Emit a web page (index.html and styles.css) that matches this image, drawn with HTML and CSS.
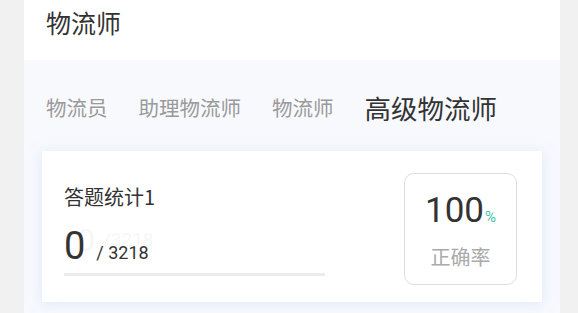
FILE: index.html
```html
<!DOCTYPE html>
<html lang="zh-CN">
<head>
<meta charset="utf-8">
<title>物流师</title>
<link rel="stylesheet" href="styles.css">
</head>
<body>
<div class="page">
  <header class="header">物流师</header>
  <section class="section">
    <nav class="tabs">
      <span class="tab">物流员</span>
      <span class="tab">助理物流师</span>
      <span class="tab">物流师</span>
      <span class="tab active">高级物流师</span>
    </nav>
    <div class="card">
      <div class="stats">
        <div class="stats-title">答题统计1</div>
        <div class="stats-num">
          <span class="big">0</span><span class="total">/ 3218</span>
        </div>
        <div class="bar"></div>
      </div>
      <div class="rate">
        <div class="rate-value">100<span class="pct">%</span></div>
        <div class="rate-label">正确率</div>
      </div>
    </div>
  </section>
</div>
</body>
</html>
```
FILE: styles.css
```css
* { box-sizing: border-box; }
html, body { margin: 0; padding: 0; }
body {
  background: #f1f1f1;
  font-family: Roboto, "Noto Sans CJK SC", sans-serif;
  height: 313px;
  overflow: hidden;
}
.page {
  margin-left: 24px;
  width: 536px;
  height: 313px;
  background: #ffffff;
}
.header {
  height: 60px;
  padding: 6px 0 0 22px;
  font-family: "Noto Sans CJK SC", sans-serif;
  font-size: 25px;
  line-height: 32px;
  color: #333333;
}
.section {
  background: #f7f9fd;
  height: 253px;
  padding: 32px 18px 0 18px;
}
.tabs {
  display: flex;
  align-items: center;
  gap: 31px;
  padding-left: 4px;
  height: 30px;
}
.tab {
  font-family: "Noto Sans CJK SC", sans-serif;
  font-size: 20.5px;
  line-height: 30px;
  color: #9a9a9a;
  white-space: nowrap;
}
.tab.active {
  font-size: 26.5px;
  color: #333333;
  position: relative;
  top: 1px;
}
.card {
  margin-top: 29px;
  background: #ffffff;
  box-shadow: 0 2px 12px rgba(205, 220, 245, 0.55);
  display: flex;
  justify-content: space-between;
  align-items: flex-start;
  padding: 22px 25px 17px 22px;
}
.stats {
  width: 261px;
}
.stats-title {
  margin-top: 11px;
  font-family: "Noto Sans CJK SC", sans-serif;
  font-size: 20px;
  line-height: 26px;
  color: #333333;
}
.stats-num {
  position: relative;
  margin-top: 16px;
  height: 40px;
  line-height: 40px;
  white-space: nowrap;
}
.stats-num::before,
.stats-num::after {
  position: absolute;
  font-family: Roboto, sans-serif;
  color: #333333;
  opacity: 0.04;
}
.stats-num::before {
  content: "0";
  left: 13px;
  top: -6px;
  font-size: 32px;
}
.stats-num::after {
  content: "/3218";
  left: 39px;
  top: -6px;
  font-size: 19px;
}
.big {
  position: relative;
  font-family: Roboto, sans-serif;
  font-size: 38px;
  color: #333333;
}
.total {
  position: relative;
  font-family: Roboto, sans-serif;
  font-size: 18px;
  color: #333333;
  margin-left: 11px;
}
.bar {
  margin-top: 7px;
  height: 3px;
  background: #ececec;
}
.rate {
  width: 113px;
  height: 112px;
  border: 1px solid #dedede;
  border-radius: 10px;
  padding-top: 17px;
  text-align: center;
}
.rate-value {
  font-family: Roboto, sans-serif;
  font-size: 35px;
  line-height: 40px;
  color: #333333;
}
.pct {
  font-size: 15px;
  color: #3ec6a4;
  margin-left: 1px;
}
.rate-label {
  margin-top: 7px;
  font-family: "Noto Sans CJK SC", sans-serif;
  font-size: 20px;
  line-height: 26px;
  color: #aaaaaa;
}
```
